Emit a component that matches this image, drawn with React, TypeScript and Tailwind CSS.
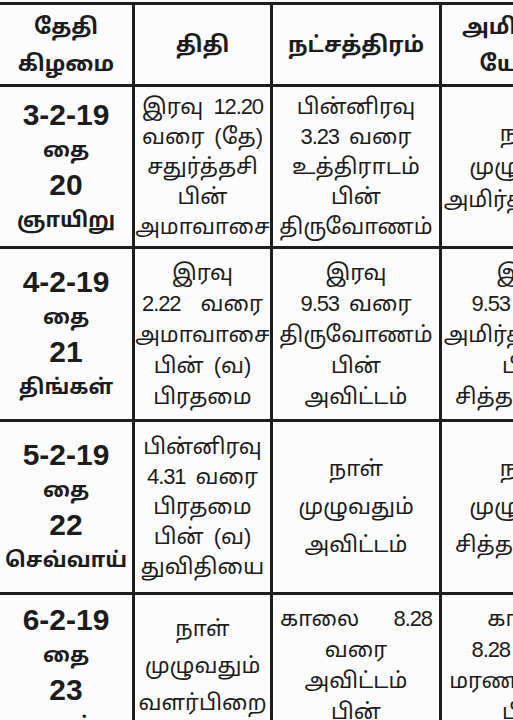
import React from "react";

type Line = { t: string; j?: boolean };
type Cell = { lines: Line[]; lh: string; kind: "h" | "d" | "b"; extra?: string };

const L = (t: string, j?: boolean): Line => ({ t, j });

const header: Cell[] = [
  { kind: "h", lh: "leading-[37px]", lines: [L("தேதி"), L("கிழமை")] },
  { kind: "h", lh: "leading-[36px]", lines: [L("திதி")] },
  { kind: "h", lh: "leading-[36px]", lines: [L("நட்சத்திரம்")] },
  { kind: "h", lh: "leading-[37px]", lines: [L("அமிர்தாதி"), L("யோகம்")] },
];

const rows: Cell[][] = [
  [
    { kind: "d", lh: "leading-[35px]", lines: [L("3-2-19"), L("தை"), L("20"), L("ஞாயிறு")] },
    { kind: "b", lh: "leading-[30px]", lines: [L("இரவு 12.20", true), L("வரை (தே)", true), L("சதுர்த்தசி"), L("பின்"), L("அமாவாசை")] },
    { kind: "b", lh: "leading-[30px]", lines: [L("பின்னிரவு"), L("3.23 வரை"), L("உத்திராடம்"), L("பின்"), L("திருவோணம்")] },
    { kind: "b", lh: "leading-[33px]", lines: [L("நாள்"), L("முழுவதும்"), L("அமிர்தயோகம்")] },
  ],
  [
    { kind: "d", lh: "leading-[35px]", lines: [L("4-2-19"), L("தை"), L("21"), L("திங்கள்")] },
    { kind: "b", lh: "leading-[31px]", lines: [L("இரவு"), L("2.22 வரை", true), L("அமாவாசை"), L("பின் (வ)"), L("பிரதமை")] },
    { kind: "b", lh: "leading-[31px]", lines: [L("இரவு"), L("9.53 வரை"), L("திருவோணம்"), L("பின்"), L("அவிட்டம்")] },
    { kind: "b", lh: "leading-[31px]", lines: [L("இரவு"), L("9.53 வரை"), L("அமிர்தயோகம்"), L("பின்"), L("சித்தயோகம்")] },
  ],
  [
    { kind: "d", lh: "leading-[35px]", lines: [L("5-2-19"), L("தை"), L("22"), L("செவ்வாய்")] },
    { kind: "b", lh: "leading-[30px]", lines: [L("பின்னிரவு"), L("4.31 வரை"), L("பிரதமை"), L("பின் (வ)"), L("துவிதியை")] },
    { kind: "b", lh: "leading-[38px]", lines: [L("நாள்"), L("முழுவதும்"), L("அவிட்டம்")] },
    { kind: "b", lh: "leading-[38px]", lines: [L("நாள்"), L("முழுவதும்"), L("சித்தயோகம்")] },
  ],
  [
    { kind: "d", lh: "leading-[35px]", extra: "pb-[16px]", lines: [L("6-2-19"), L("தை"), L("23"), L("புதன்")] },
    { kind: "b", lh: "leading-[37px]", extra: "pb-[30px]", lines: [L("நாள்"), L("முழுவதும்"), L("வளர்பிறை")] },
    { kind: "b", lh: "leading-[31px]", lines: [L("காலை 8.28", true), L("வரை"), L("அவிட்டம்"), L("பின்"), L("சதயம்")] },
    { kind: "b", lh: "leading-[31px]", lines: [L("காலை"), L("8.28 வரை"), L("மரணயோகம்"), L("பின்"), L("சித்தயோகம்")] },
  ],
];

const isNumeric = (s: string) => /^[0-9.]+$/.test(s) && /[0-9]/.test(s);

function Word({ w, body }: { w: string; body: boolean }) {
  if (body && isNumeric(w)) {
    return <span className="text-[22px] tracking-[-1.1px]">{w}</span>;
  }
  return <span>{w}</span>;
}

function CellView({ cell }: { cell: Cell }) {
  const body = cell.kind === "b";
  const base = body
    ? "font-['Liberation_Sans','Noto_Sans_Tamil','Lohit_Tamil',sans-serif] text-[22px] font-normal"
    : "font-['Liberation_Sans','Noto_Sans_Tamil','Lohit_Tamil',sans-serif] font-bold";
  return (
    <div
      className={`bg-[#fcfcfc] flex flex-col items-center justify-center text-center text-[#1c1c1c] overflow-hidden ${cell.lh} ${base} ${cell.extra ?? ""}`}
    >
      {cell.lines.map((ln, i) => {
        const isNum = cell.kind === "d" && /^[0-9-]+$/.test(ln.t);
        const size =
          cell.kind === "h" ? "text-[22px]" : cell.kind === "d" ? (isNum ? "text-[30px]" : "text-[21px]") : "";
        const parts = ln.t.split(" ");
        if (ln.j) {
          return (
            <div key={i} className={`w-full flex justify-between px-[7px] whitespace-nowrap ${size}`}>
              {parts.map((p, k) => (
                <Word key={k} w={p} body={body} />
              ))}
            </div>
          );
        }
        return (
          <div key={i} className={`flex gap-[10px] justify-center whitespace-nowrap ${size}`}>
            {parts.map((p, k) => (
              <Word key={k} w={p} body={body} />
            ))}
          </div>
        );
      })}
    </div>
  );
}

export default function App() {
  return (
    <div className="w-[513px] h-[720px] overflow-hidden bg-[#fcfcfc]">
      <div className="ml-[-3px] mt-[2px] w-[620px] p-[3px] bg-[#1e1e1e] grid grid-cols-[132px_135px_166px_170px] grid-rows-[79px_159px_170px_170px_170px] gap-[3px]">
        {header.map((c, i) => (
          <CellView key={`h${i}`} cell={c} />
        ))}
        {rows.map((r, ri) => r.map((c, ci) => <CellView key={`${ri}-${ci}`} cell={c} />))}
      </div>
    </div>
  );
}
